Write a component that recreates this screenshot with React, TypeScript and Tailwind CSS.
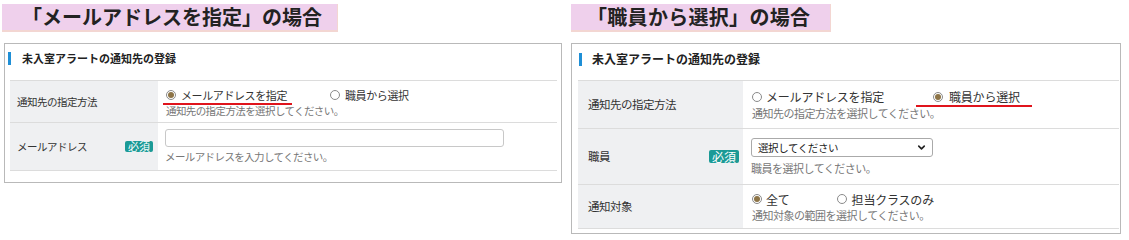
import React from "react";
import { ChevronDown } from "lucide-react";

const jp = { fontFamily: '"Noto Sans CJK JP", "Noto Sans", sans-serif' };

function Radio({ checked }: { checked?: boolean }) {
  return (
    <span className="inline-flex h-[10px] w-[10px] shrink-0 items-center justify-center rounded-full border border-[#8a8a8a] bg-white">
      {checked && <span className="h-[6px] w-[6px] rounded-full bg-[#8d7447]" />}
    </span>
  );
}

function Badge({ big }: { big?: boolean }) {
  return (
    <span
      className={
        big
          ? "rounded-[2px] bg-[#1b9a96] px-[3px] text-[12px] leading-[13px] text-white"
          : "rounded-[2px] bg-[#1b9a96] px-[3px] text-[11px] leading-[11px] text-white"
      }
    >
      必須
    </span>
  );
}

function Heading({ big }: { big?: boolean }) {
  return (
    <div className={big ? "flex items-center pl-[7px] pt-[8px]" : "flex items-center pl-[3px] pt-[7px]"}>
      <span className="h-[13px] w-[3px] bg-[#1f8fd6]" />
      <span
        className={
          big
            ? "ml-[10px] text-[12px] font-bold leading-[14px] text-[#222]"
            : "ml-[11px] text-[11px] font-bold leading-[14px] text-[#222]"
        }
      >
        未入室アラートの通知先の登録
      </span>
    </div>
  );
}

function LeftPanel() {
  return (
    <div className="flex w-[559px] flex-col pl-[2px] pt-[4px]">
      <div className="flex h-[28px] w-[336px] items-center border-b-2 border-r border-[#f3d6d2] bg-[#efd0ec] pl-[20px]">
        <span className="text-[20px] font-bold leading-none text-[#222]">「メールアドレスを指定」の場合</span>
      </div>
      <div className="ml-[2px] mt-[11px] h-[140px] w-[558px] border border-[#b9b9b9] bg-white">
        <Heading />
        <div className="ml-[5px] mr-[4px] mt-[15px] border-t border-b border-[#dcdcdc]">
          <div className="flex h-[42px] border-b border-[#dcdcdc]">
            <div className="flex w-[148px] items-center bg-[#eff0f2] pl-[7px] text-[10.5px] tracking-[-0.5px] text-[#333]">
              通知先の指定方法
            </div>
            <div className="flex flex-col justify-center pl-[8px] pt-[1px]">
              <div className="flex items-center leading-[14px] text-[#333]">
                <span className="relative flex items-center">
                  <Radio checked />
                  <span className="ml-[5px] text-[11px] tracking-[-0.4px]">メールアドレスを指定</span>
                  <span className="absolute -left-[3px] -right-[5px] top-[15px] h-[2px] bg-[#e0141c]" />
                </span>
                <span className="ml-[43px] flex items-center">
                  <Radio />
                  <span className="ml-[5px] text-[11px] tracking-[-0.4px]">職員から選択</span>
                </span>
              </div>
              <div className="mt-[2px] text-[10.5px] leading-[13px] tracking-[-0.6px] text-[#777]">
                通知先の指定方法を選択してください。
              </div>
            </div>
          </div>
          <div className="flex h-[47px]">
            <div className="flex w-[148px] items-center justify-between bg-[#eff0f2] pl-[7px] pr-[5px] text-[#333]">
              <span className="text-[10.5px] tracking-[-0.5px]">メールアドレス</span>
              <Badge />
            </div>
            <div className="flex flex-col justify-center pl-[7px]">
              <div className="h-[18px] w-[339px] rounded-[3px] border border-[#c8c8c8] bg-white" />
              <div className="mt-[3px] text-[10.5px] leading-[14px] tracking-[-0.6px] text-[#777]">
                メールアドレスを入力してください。
              </div>
            </div>
          </div>
        </div>
      </div>
    </div>
  );
}

function RightPanel() {
  return (
    <div className="ml-[12px] flex w-[550px] flex-col pt-[4px]">
      <div className="flex h-[28px] w-[260px] items-center border-b-2 border-r border-[#f3d6d2] bg-[#efd0ec] pl-[16px]">
        <span className="text-[20px] font-bold leading-none tracking-[0.3px] text-[#222]">「職員から選択」の場合</span>
      </div>
      <div className="mt-[11px] h-[191px] w-[550px] border border-[#b9b9b9] bg-white">
        <Heading big />
        <div className="ml-[6px] mr-[1px] mt-[14px] border-t border-b border-[#dcdcdc]">
          <div className="flex h-[48px] border-b border-[#dcdcdc]">
            <div className="flex w-[165px] items-center bg-[#eff0f2] pl-[10px] text-[11.5px] tracking-[-0.5px] text-[#333]">
              通知先の指定方法
            </div>
            <div className="flex flex-col justify-center pl-[9px]">
              <div className="flex items-center leading-[15px] text-[#333]">
                <span className="flex items-center">
                  <Radio />
                  <span className="ml-[4px] text-[12px] tracking-[-0.2px]">メールアドレスを指定</span>
                </span>
                <span className="relative ml-[49px] flex items-center">
                  <Radio checked />
                  <span className="ml-[6px] text-[12px] tracking-[-0.2px]">職員から選択</span>
                  <span className="absolute -left-[17px] -right-[12px] top-[16px] h-[2px] bg-[#e0141c]" />
                </span>
              </div>
              <div className="mt-[2px] text-[11px] leading-[14px] tracking-[-0.5px] text-[#777]">
                通知先の指定方法を選択してください。
              </div>
            </div>
          </div>
          <div className="flex h-[56px] border-b border-[#dcdcdc]">
            <div className="flex w-[165px] items-center justify-between bg-[#eff0f2] pl-[10px] pr-[4px] text-[#333]">
              <span className="text-[11.5px] tracking-[-0.5px]">職員</span>
              <Badge big />
            </div>
            <div className="flex flex-col justify-center pl-[8px]">
              <div className="flex h-[19px] w-[182px] items-center justify-between rounded-[3px] border border-[#aaa] bg-white pl-[6px] pr-[5px] text-[10.5px] tracking-[-0.4px] text-[#222]">
                <span>選択してください</span>
                <ChevronDown size={11} strokeWidth={3.5} className="text-[#222]" />
              </div>
              <div className="mt-[4px] text-[11px] leading-[14px] tracking-[-0.5px] text-[#777]">
                職員を選択してください。
              </div>
            </div>
          </div>
          <div className="flex h-[43px]">
            <div className="flex w-[165px] items-center bg-[#eff0f2] pl-[10px] text-[11.5px] tracking-[-0.5px] text-[#333]">
              通知対象
            </div>
            <div className="flex flex-col justify-center pl-[9px]">
              <div className="flex items-center leading-[15px] text-[#333]">
                <span className="flex items-center">
                  <Radio checked />
                  <span className="ml-[4px] text-[12px] tracking-[-0.2px]">全て</span>
                </span>
                <span className="ml-[47px] flex items-center">
                  <Radio />
                  <span className="ml-[5px] text-[12px] tracking-[-0.2px]">担当クラスのみ</span>
                </span>
              </div>
              <div className="mt-[2px] text-[11px] leading-[13px] tracking-[-0.5px] text-[#777]">
                通知対象の範囲を選択してください。
              </div>
            </div>
          </div>
        </div>
      </div>
    </div>
  );
}

export default function App() {
  return (
    <div className="flex h-[240px] w-[1129px] bg-white" style={jp}>
      <LeftPanel />
      <RightPanel />
    </div>
  );
}
